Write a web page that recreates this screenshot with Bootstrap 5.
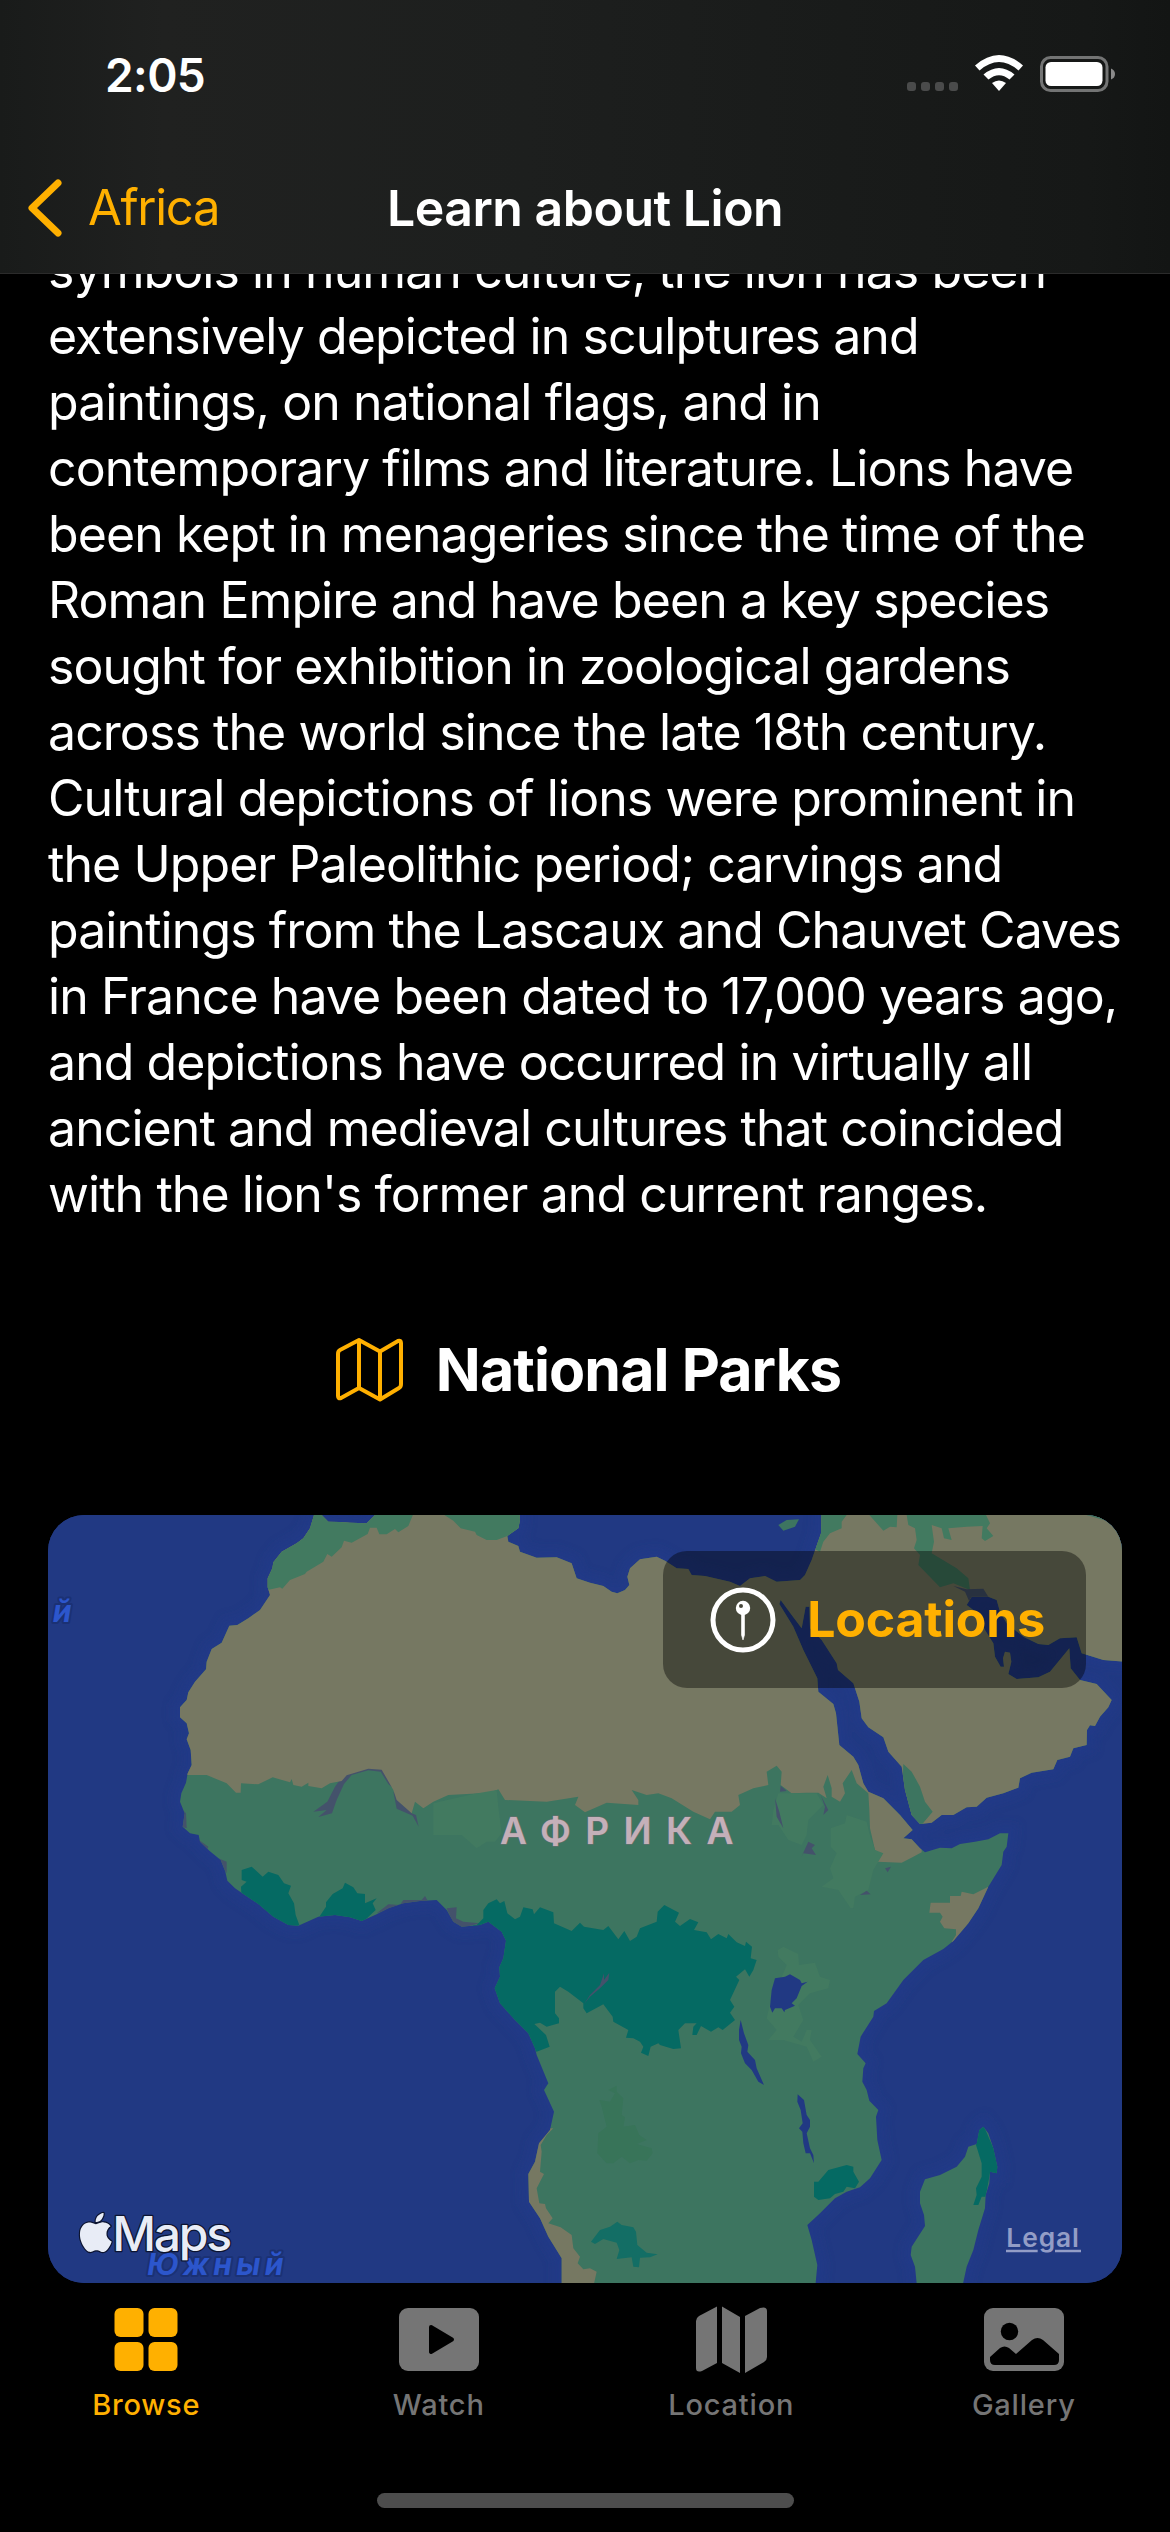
<!DOCTYPE html>
<html lang="en">
<head>
<meta charset="utf-8">
<meta name="viewport" content="width=device-width, initial-scale=1">
<title>Learn about Lion</title>
<link href="https://cdn.jsdelivr.net/npm/bootstrap@5.3.0/dist/css/bootstrap.min.css" rel="stylesheet">
<style>
  :root { --accent: #ffb000; --muted: #757575; }
  body { font-family: Inter, "Liberation Sans", sans-serif; background: #000; color: #fff; width: 1170px; height: 2532px; overflow: hidden; }
  svg { display: block; flex: none; }
  .top-area { height: 274px; border-bottom: 1px solid #2b2b2b; background: linear-gradient(90deg, #191b1a 0, #202120 14%, #1d1f1e 45%, #191b1a 72%, #161817 93%, #131514 100%); }
  .status-row { height: 148px; padding: 0 54px 0 105px; }
  .clock { font-size: 46px; font-weight: 600; line-height: 1; letter-spacing: -.6px; padding-top: 2px; }
  .nav-row { height: 125px; padding: 0 28px 6px; }
  .nav-side { width: 359px; }
  .back-link { color: var(--accent); font-size: 49px; letter-spacing: -1.3px; line-height: 60px; gap: 26px; }
  .page-title { font-size: 50px; font-weight: 600; letter-spacing: -.5px; line-height: 60px; }
  .scroll-area { height: 2010px; padding: 0 48px; }
  .story { font-size: 50px; line-height: 66px; letter-spacing: -.92px; margin: -37px 0 0; }
  .story span { display: block; white-space: nowrap; }
  .section-title { height: 72px; margin-top: 107px; padding-left: 7px; gap: 33px; }
  .section-title h2 { font-size: 59px; font-weight: 700; letter-spacing: -.9px; line-height: 72px; }
  .map-card { height: 768px; margin-top: 109px; border-radius: 36px; background: #213983; }
  .loc-btn { top: 36px; right: 36px; width: 423px; height: 137px; border-radius: 24px; background: rgba(0,0,0,.4); color: var(--accent); font-size: 50px; font-weight: 700; letter-spacing: -.2px; padding: 0 41px 0 47px; }
  .tab-row { height: 200px; }
  .tab-link { color: var(--muted); font-size: 29px; font-weight: 500; letter-spacing: .8px; line-height: 36px; padding-top: 22px; gap: 11px; }
  .tab-link.active { color: var(--accent); }
  .tab-link svg { height: 70px; }
  .home-bar { width: 417px; height: 15px; border-radius: 8px; background: #4d4d4d; margin: 9px auto 0; }
</style>
</head>
<body>
<header class="top-area position-relative z-1">
  <div class="status-row d-flex align-items-center justify-content-between">
    <span class="clock">2:05</span>
    <svg width="210" height="40" viewBox="906 54 210 40">
      <g fill="#4a4b4b"><rect x="907" y="82" width="9" height="9" rx="3"/><rect x="921" y="82" width="9" height="9" rx="3"/><rect x="935" y="82" width="9" height="9" rx="3"/><rect x="949" y="82" width="9" height="9" rx="3"/></g>
      <g fill="#fff"><path d="M975 65.500Q999 44.500 1023 65.500L1018.500 70.500Q999 53.500 979.500 70.500Z"/><path d="M983.500 74.500Q999 61.500 1014.500 74.500L1009.500 79.500Q999 71 988.500 79.500Z"/><path d="M992 83Q999 78 1006 83L999 91Z"/></g>
      <rect x="1041.500" y="57.500" width="65.500" height="33" rx="9" fill="none" stroke="#737474" stroke-width="3"/>
      <rect x="1045.500" y="62" width="57" height="24" rx="5.500" fill="#fff"/>
      <path d="M1111 68.500Q1115 70 1115 74T1111 79.500Z" fill="#8a8a8a"/>
    </svg>
  </div>
  <nav class="nav-row d-flex align-items-center">
    <div class="nav-side d-flex"><a class="back-link d-flex align-items-center text-decoration-none" href="#">
      <svg width="34" height="58" viewBox="0 0 34 58"><path d="M30 4L4 29L30 54" fill="none" stroke="#ffb000" stroke-width="7" stroke-linecap="round" stroke-linejoin="round"/></svg>
      <span>Africa</span></a></div>
    <span class="page-title">Learn about Lion</span>
  </nav>
</header>

<main class="scroll-area overflow-hidden">
  <p class="story">
    <span>symbols in human culture, the lion has been</span>
    <span>extensively depicted in sculptures and</span>
    <span>paintings, on national flags, and in</span>
    <span>contemporary films and literature. Lions have</span>
    <span>been kept in menageries since the time of the</span>
    <span>Roman Empire and have been a key species</span>
    <span>sought for exhibition in zoological gardens</span>
    <span>across the world since the late 18th century.</span>
    <span>Cultural depictions of lions were prominent in</span>
    <span>the Upper Paleolithic period; carvings and</span>
    <span>paintings from the Lascaux and Chauvet Caves</span>
    <span>in France have been dated to 17,000 years ago,</span>
    <span>and depictions have occurred in virtually all</span>
    <span>ancient and medieval cultures that coincided</span>
    <span>with the lion's former and current ranges.</span>
  </p>

  <div class="section-title d-flex align-items-center justify-content-center">
    <svg width="67" height="66" viewBox="0 0 67 66" fill="none" stroke="#ffb000" stroke-width="4" stroke-linejoin="round"><path d="M2 17Q2 14 4 13L23 3L44 14.500L62 4Q65 3 65 6V47Q65 50 63 51L44 62.500L23 51L5 61Q2 62 2 59ZM23 3V51M44 14.500V62.500"/></svg>
    <h2 class="mb-0">National Parks</h2>
  </div>

  <section class="map-card position-relative overflow-hidden">
    <svg width="1074" height="768" viewBox="24 45 3222 2304">
      <defs>
        <path id="mainland" d="M822 20V45L810 85L790 115L770 130L725 155L700 187L697 205L683 235V262L690 285L660 330L625 355L592 375L568 377L545 428L515 447L500 485L498 508L465 545L445 577L440 600L420 622V652L440 670L447 700L440 718L452 750L455 795L443 820L438 848L424 880L420 905L434 940L428 980L450 1000L476 1005L480 1025L508 1052L542 1080L556 1115L562 1142L585 1165L610 1182L655 1212L700 1250L745 1275L775 1277L835 1250L885 1245L930 1252L965 1263L1010 1243L1045 1225L1090 1210L1140 1203L1190 1200L1220 1230L1240 1265L1265 1280L1320 1275L1345 1265L1385 1295L1398 1322L1390 1375L1378 1402L1380 1430L1364 1465L1380 1510L1425 1560L1465 1600L1485 1645L1490 1665L1525 1750L1512 1770L1542 1835L1530 1890L1497 1930L1485 1985L1465 2022L1467 2105L1500 2155L1525 2210L1565 2275V2370H2325L2332 2295L2315 2220L2302 2175L2340 2140L2385 2095L2420 2075L2460 2062L2490 2035L2525 1980L2512 1920L2508 1850L2515 1830L2488 1802L2480 1770L2467 1745L2470 1705L2477 1690L2452 1662L2462 1610L2500 1550L2502 1533L2540 1510L2590 1440L2650 1380L2710 1347L2740 1323L2785 1270L2815 1225L2845 1160L2885 1095L2890 1055L2900 1040L2905 1000L2880 1000L2845 1018L2805 1025L2760 1032L2735 1045L2700 1043L2655 1057L2640 1045L2615 1018L2590 1015L2618 990L2580 945L2530 895L2485 875L2470 850L2455 795L2440 770L2398 735L2388 640L2380 612L2335 575L2332 535L2290 450L2260 380L2218 312L2222 300L2255 345L2285 385L2297 320L2308 320L2310 385L2345 420L2390 490L2394 510L2440 550L2458 605L2465 655L2485 682L2530 712L2545 755L2585 800L2595 870L2615 945L2640 972L2675 968L2705 945L2740 945L2780 922L2810 920L2840 893L2890 880L2935 863L2940 835L2975 818L3040 808L3052 780L3090 770L3100 745L3140 735L3141 690L3150 676L3165 678L3180 650L3205 622L3215 600L3170 552L3120 540L3092 505L3088 445L3030 515L2995 532L2930 537L2905 522L2914 485L2910 458L2895 455L2889 475L2892 500L2882 500L2865 470L2860 430L2835 390L2820 360L2800 330L2780 315L2795 290L2845 290L2870 300L2880 335L2900 370L2950 410L2995 432L3025 435L3060 415L3110 412L3125 460L3190 480L3260 486V20H2345L2343 100L2315 180L2295 225L2280 240L2210 245L2175 228L2130 235L2100 258L2070 245L1995 228L1955 225L1945 207L1910 205L1875 182L1850 170L1800 178L1770 205L1762 230L1768 255L1755 270L1732 280L1715 275L1690 258L1650 248L1610 235L1595 190L1550 172L1490 173L1440 155L1435 138L1405 125L1402 108L1435 85L1440 60L1437 20H1005V45L980 70L930 68L900 66L865 65L845 45V20Z"/>
        <path id="island" d="M2830 1880L2845 1900L2860 1945L2872 2000L2870 2020L2850 2015L2848 2050L2837 2085L2835 2125L2815 2190L2800 2250L2780 2300L2765 2370H2632L2625 2300L2612 2265L2615 2240L2655 2178L2652 2145L2640 2110V2075L2655 2038L2700 2025L2750 2000L2775 1970L2785 1940L2810 1932L2818 1890Z"/>
        <clipPath id="coast"><use href="#mainland"/><use href="#island"/></clipPath>
        <filter id="glow" x="-5%" y="-5%" width="110%" height="110%"><feGaussianBlur stdDeviation="14"/></filter>
      </defs>
      <rect x="24" y="45" width="3222" height="2304" fill="#213983"/>
      <g fill="none" stroke="#223a8b" stroke-width="50" opacity=".5" filter="url(#glow)"><use href="#mainland"/><use href="#island"/></g>
      <path d="M2215 75L2240 60L2277 58L2265 80L2230 92Z" fill="#3d7560"/>
      <g clip-path="url(#coast)">
        <rect x="24" y="45" width="3222" height="2304" fill="#3d7560"/>
        <path fill="#44526b" d="M820 935L862 905L885 860L910 825L985 804L1028 808L1066 870L1045 852L1022 815L985 811L935 825L912 852L890 900L876 940L835 951L860 930ZM1060 875L1115 940L1128 945L1136 980L1118 947L1070 926ZM420 920L438 940L440 985L425 980ZM470 1015L505 1040L500 1055ZM535 1075L560 1085V1120ZM1010 1240L1045 1213L1080 1215L1090 1200H1145L1155 1188L1165 1205L1090 1212L1045 1230ZM1220 1225L1250 1222L1248 1255L1270 1265L1320 1270L1260 1285L1235 1262Z"/>
        <path fill="#767862" d="M0 0H3300V990H2645V1057L2620 1070L2585 1088L2512 1085L2525 1065L2505 1050L2490 985L2488 930L2485 880L2450 850L2435 810L2408 850L2415 880L2400 905L2375 890V865L2363 825L2350 860L2360 895L2335 878H2300L2255 880L2222 855L2225 815L2210 797L2180 815L2185 855L2140 865L2095 885L2100 915L2075 935H2025L2010 958L1960 935L1895 895L1855 880L1820 885L1775 870L1795 900V915L1700 908L1635 937L1605 915L1615 890L1520 905L1395 900L1375 868L1350 878L1225 885L1180 905L1150 925L1125 905L1115 940L1070 900L1060 870L1025 809L985 806L920 826L905 843L870 850L845 865L805 858V848L785 860L760 855L755 837L750 847L698 832L655 853L603 850L602 878H588L560 850L500 825L443 825H0Z"/>
        <path fill="#427a60" d="M600 0H1137L1105 78L1075 97L1065 87L1040 103L1018 103L1010 83H990L983 102L935 128L912 122L905 142L875 170L862 162L850 185L800 215L795 222L750 240L727 266L720 262L683 270H600ZM1213 45L1240 62L1262 85L1305 95L1310 105L1340 120L1370 120L1402 108L1470 80V20H1213ZM2345 20H2420V45L2405 65V85L2370 100L2350 125L2340 155L2310 140ZM2488 45L2530 92L2550 80L2570 82L2572 45ZM2600 45L2605 75L2625 85L2630 120L2622 145L2640 165L2635 195L2700 262L2740 250L2790 270L2785 235L2750 205L2675 160L2682 125L2675 75L2705 85L2712 115L2735 120L2725 85L2780 80L2828 78L2825 115L2835 123L2860 108L2840 85L2850 70L2838 45Z"/>
        <path fill="#3d7560" d="M2590 792L2615 815L2640 860L2655 905L2678 935L2640 980L2605 945L2587 870ZM3140 45H3250V100L3210 65Z"/>
        <path fill="#427a60" d="M1180 910L1300 882L1370 870L1375 920L1385 1000L1365 1025H1340L1310 1045L1265 1005L1180 1005ZM2215 880L2330 880L2350 915L2305 960L2300 1005L2285 1035L2245 1020L2215 975L2195 975L2200 930ZM2420 945L2480 965L2488 1000L2505 1050L2530 1060L2500 1110L2485 1170L2445 1190L2440 1225L2432 1225L2395 1170L2345 1160L2380 1135L2370 1105L2390 1060L2372 1040V985L2415 970ZM2213 1350L2230 1340L2275 1362L2277 1395L2325 1388L2340 1430L2370 1440L2365 1465L2310 1480L2275 1515L2290 1560L2260 1610L2285 1625L2300 1590L2315 1590L2310 1620L2345 1670L2320 1685L2300 1640L2230 1620L2185 1620L2210 1590L2180 1555L2190 1510L2230 1420L2240 1395L2215 1370Z"/>
        <path fill="#44526b" d="M2205 895L2218 935L2230 985L2210 950ZM2222 857L2240 873L2220 875ZM2342 885L2365 930L2350 945L2355 920ZM2305 1025L2325 1035L2315 1045L2328 1065L2290 1060L2283 1073ZM2373 1055L2395 1062ZM2535 1105L2553 1100L2543 1117ZM2460 1185L2480 1172L2492 1183ZM2740 258L2780 268L2830 266L2845 290L2790 310L2775 275Z"/>
        <path fill="#767862" d="M2845 1160L2800 1183L2765 1175L2762 1188H2730V1208H2672L2668 1238L2700 1238L2708 1250L2700 1265L2713 1285L2748 1288V1305L2735 1325L2760 1330L2870 1260ZM1540 1885L1520 1905L1502 1935L1505 1955L1500 2015L1512 2022L1490 2065L1498 2110L1515 2112L1518 2125L1538 2155L1525 2170L1562 2182L1595 2205L1600 2245L1620 2270L1613 2290L1630 2308L1650 2305L1670 2315L1660 2360H1400V1890Z"/>
        <path fill="#056a63" d="M605 1110L635 1100L668 1130L685 1115L715 1125L732 1150L753 1157L745 1180L762 1210L767 1245L778 1275L740 1300L605 1200L603 1160L620 1145L605 1140ZM835 1255L858 1220V1207L878 1182L908 1165L915 1148L940 1162L952 1180L975 1182V1210L1010 1195L998 1210L1007 1230L965 1270ZM1310 1275L1330 1255L1330 1230L1345 1210L1370 1198L1380 1210L1393 1203L1402 1240L1425 1258L1440 1250L1450 1222L1478 1228L1482 1243L1500 1222L1540 1237L1542 1270L1595 1293L1620 1268L1632 1280L1690 1290L1705 1278L1735 1318L1753 1293L1770 1323L1790 1310L1800 1285L1850 1265L1853 1235L1873 1215L1917 1238L1905 1265L1920 1278L1950 1257L1975 1267L1962 1290L2000 1297L2013 1318L2035 1302L2060 1315L2065 1302L2090 1327L2115 1338L2118 1325L2136 1340L2132 1375L2150 1380L2140 1410L2128 1430L2115 1408L2088 1430L2098 1440L2070 1500L2083 1520L2070 1538L2085 1560L2048 1590L2035 1582L2013 1595L1983 1578L1970 1605H1957L1960 1580L1970 1570L1935 1570L1915 1590L1923 1645L1900 1647L1860 1635L1855 1630L1832 1640L1825 1668L1803 1658L1810 1640L1800 1625L1780 1615L1758 1613L1765 1590L1720 1565L1718 1550L1690 1513L1640 1540L1630 1525V1510L1585 1475L1560 1460L1545 1475L1545 1540L1557 1555V1570L1520 1580L1500 1568L1483 1572L1518 1605L1529 1640L1490 1655L1300 1520V1275ZM2322 2045H2335L2365 2010L2420 1995L2440 2000V2015L2457 2045L2445 2065L2420 2060L2410 2075L2385 2082L2370 2095L2335 2100L2322 2090ZM2830 1875L2880 1990V2030L2850 2020L2837 2090H2825L2815 2115L2800 2115L2810 2085L2808 2065L2825 2030V1990L2808 1935L2815 1890Z"/>
        <path fill="#136e65" d="M1653 2225L1680 2190L1710 2180L1732 2165L1745 2175L1780 2182L1788 2195L1792 2235L1820 2258L1853 2263L1830 2272L1800 2273L1797 2302L1780 2300L1775 2272L1730 2277L1738 2250L1730 2228L1690 2217L1665 2232Z"/>
        <path fill="#387459" d="M1705 1770L1730 1757V1775L1750 1795L1745 1845L1755 1852L1750 1880L1785 1875L1798 1905L1820 1920L1790 1932L1835 1945L1838 1960L1820 1982L1795 1980L1770 1990L1745 1970L1720 1990H1700L1672 1960L1675 1900L1700 1880L1685 1820L1678 1800L1710 1805L1725 1780Z"/>
        <path fill="#44526b" d="M1632 1512L1650 1485L1680 1455L1692 1420V1440L1708 1418L1705 1440L1680 1465L1650 1490Z"/>
        <g fill="#213983"><path d="M2205 1435L2235 1430L2250 1423L2280 1440L2285 1450L2303 1445L2285 1458L2270 1495L2255 1510L2265 1517L2235 1530L2233 1537L2225 1525L2205 1525L2197 1538L2190 1520L2195 1470Z"/><path d="M2102 1560L2112 1600L2125 1635L2122 1655L2145 1680L2150 1705L2172 1755L2155 1745L2135 1710L2115 1690L2103 1660L2105 1640L2097 1620V1590Z"/><path d="M2273 1783L2292 1800L2300 1845L2310 1860V1880L2300 1900L2310 1945L2320 1965L2322 1990L2310 1960L2297 1960L2290 1930L2287 1895L2277 1885L2288 1870L2282 1830L2272 1805Z"/></g>
      </g>
      <g font-family="Inter, 'Noto Sans', sans-serif" font-weight="700">
        <text x="1380" y="1031" font-size="111" font-weight="600" fill="#c4b0b9" stroke="#6d6f72" stroke-width="3" paint-order="stroke" textLength="700">АФРИКА</text>
        <g font-style="italic" fill="#2c56cc" stroke="#1b3174" stroke-width="12" paint-order="stroke" stroke-linejoin="round"><text x="38" y="366" font-size="90">й</text><text x="-66" y="366" font-size="90">ы</text><text x="322" y="2326" font-size="90" textLength="408">Южный</text></g>
      </g>
      <g fill="#e8ecf6" stroke="#0c1430" stroke-width="8" paint-order="stroke" stroke-linejoin="round">
        <path transform="translate(109 2139) scale(7.3)" stroke-width="1" d="M11.182.008C11.148-.03 9.923.023 8.857 1.180c-1.066 1.156-.902 2.482-.878 2.516s1.520.087 2.475-1.258.762-2.391.728-2.430m3.314 11.733c-.048-.096-2.325-1.234-2.113-3.422s1.675-2.789 1.698-2.854-.597-.79-1.254-1.157a3.700 3.700 0 0 0-1.563-.434c-.108-.003-.483-.095-1.254.116-.508.139-1.653.589-1.968.607-.316.018-1.256-.522-2.267-.665-.647-.125-1.333.131-1.824.328-.49.196-1.422.754-2.074 2.237-.652 1.482-.311 3.830-.067 4.560s.625 1.924 1.273 2.796c.576.984 1.340 1.667 1.659 1.899s1.219.386 1.843.067c.502-.308 1.408-.485 1.766-.472.357.013 1.061.154 1.782.539.571.197 1.111.115 1.652-.105.541-.221 1.324-1.059 2.238-2.758q.52-1.185.473-1.282"/>
        <text x="217" y="2254" font-family="Inter, sans-serif" font-size="144" font-weight="500" textLength="359">Maps</text>
      </g>
      <g font-family="Inter, sans-serif"><text x="2899" y="2240" font-size="79" font-weight="600" fill="#939dc6" textLength="218">Legal</text><path d="M2898 2253H2993M3045 2253H3123" stroke="#939dc6" stroke-width="8"/></g>
    </svg>
    <a href="#" class="loc-btn position-absolute d-flex align-items-center justify-content-between text-decoration-none">
      <svg width="66" height="66" viewBox="0 0 66 66"><circle cx="33" cy="33" r="30" fill="none" stroke="#fff" stroke-width="5"/><path d="M31.500 27H34.500V48L33 53L31.500 48Z" fill="#fff" stroke="#fff" stroke-width=".6"/><circle cx="33" cy="21" r="7.200" fill="#fff"/><circle cx="31" cy="19" r="2" fill="#46463a"/></svg>
      <span>Locations</span>
    </a>
  </section>
</main>

<footer>
  <nav class="tab-row row g-0 text-center">
    <a href="#" class="tab-link active col-3 d-flex flex-column align-items-center text-decoration-none"><svg width="64" viewBox="0 0 64 70" fill="currentColor"><rect x=".5" y="2" width="29" height="29" rx="6"/><rect x="34.500" y="2" width="29" height="29" rx="6"/><rect x=".5" y="36" width="29" height="29" rx="6"/><rect x="34.500" y="36" width="29" height="29" rx="6"/></svg><span>Browse</span></a>
    <a href="#" class="tab-link col-3 d-flex flex-column align-items-center text-decoration-none"><svg width="80" viewBox="0 0 80 70"><rect y="2" width="80" height="63" rx="9" fill="currentColor"/><path d="M32 21L53 33.500L32 46Z" fill="#000" stroke="#000" stroke-width="4" stroke-linejoin="round"/></svg><span>Watch</span></a>
    <a href="#" class="tab-link col-3 d-flex flex-column align-items-center text-decoration-none"><svg width="71" viewBox="0 0 71 70" fill="currentColor"><path d="M0 15Q0 12 3 10L21 .5V57L6 65Q0 67 0 62ZM26 .5L44 11V67L26 57ZM49 10L64 2Q71 0 71 5V51Q71 54 68 56L49 67Z"/></svg><span>Location</span></a>
    <a href="#" class="tab-link col-3 d-flex flex-column align-items-center text-decoration-none"><svg width="80" viewBox="0 0 80 70"><rect y="2" width="80" height="63" rx="9" fill="currentColor"/><circle cx="25.500" cy="25.500" r="8.700"/><path d="M6 51L16 42Q20.500 39 25 42L32 48L48 34Q53.500 30 59 34L75 48V54Q75 59 70 59H11Q6 59 6 54Z"/></svg><span>Gallery</span></a>
  </nav>
  <div class="home-bar"></div>
</footer>
<script src="https://cdn.jsdelivr.net/npm/bootstrap@5.3.0/dist/js/bootstrap.bundle.min.js"></script>
</body>
</html>
